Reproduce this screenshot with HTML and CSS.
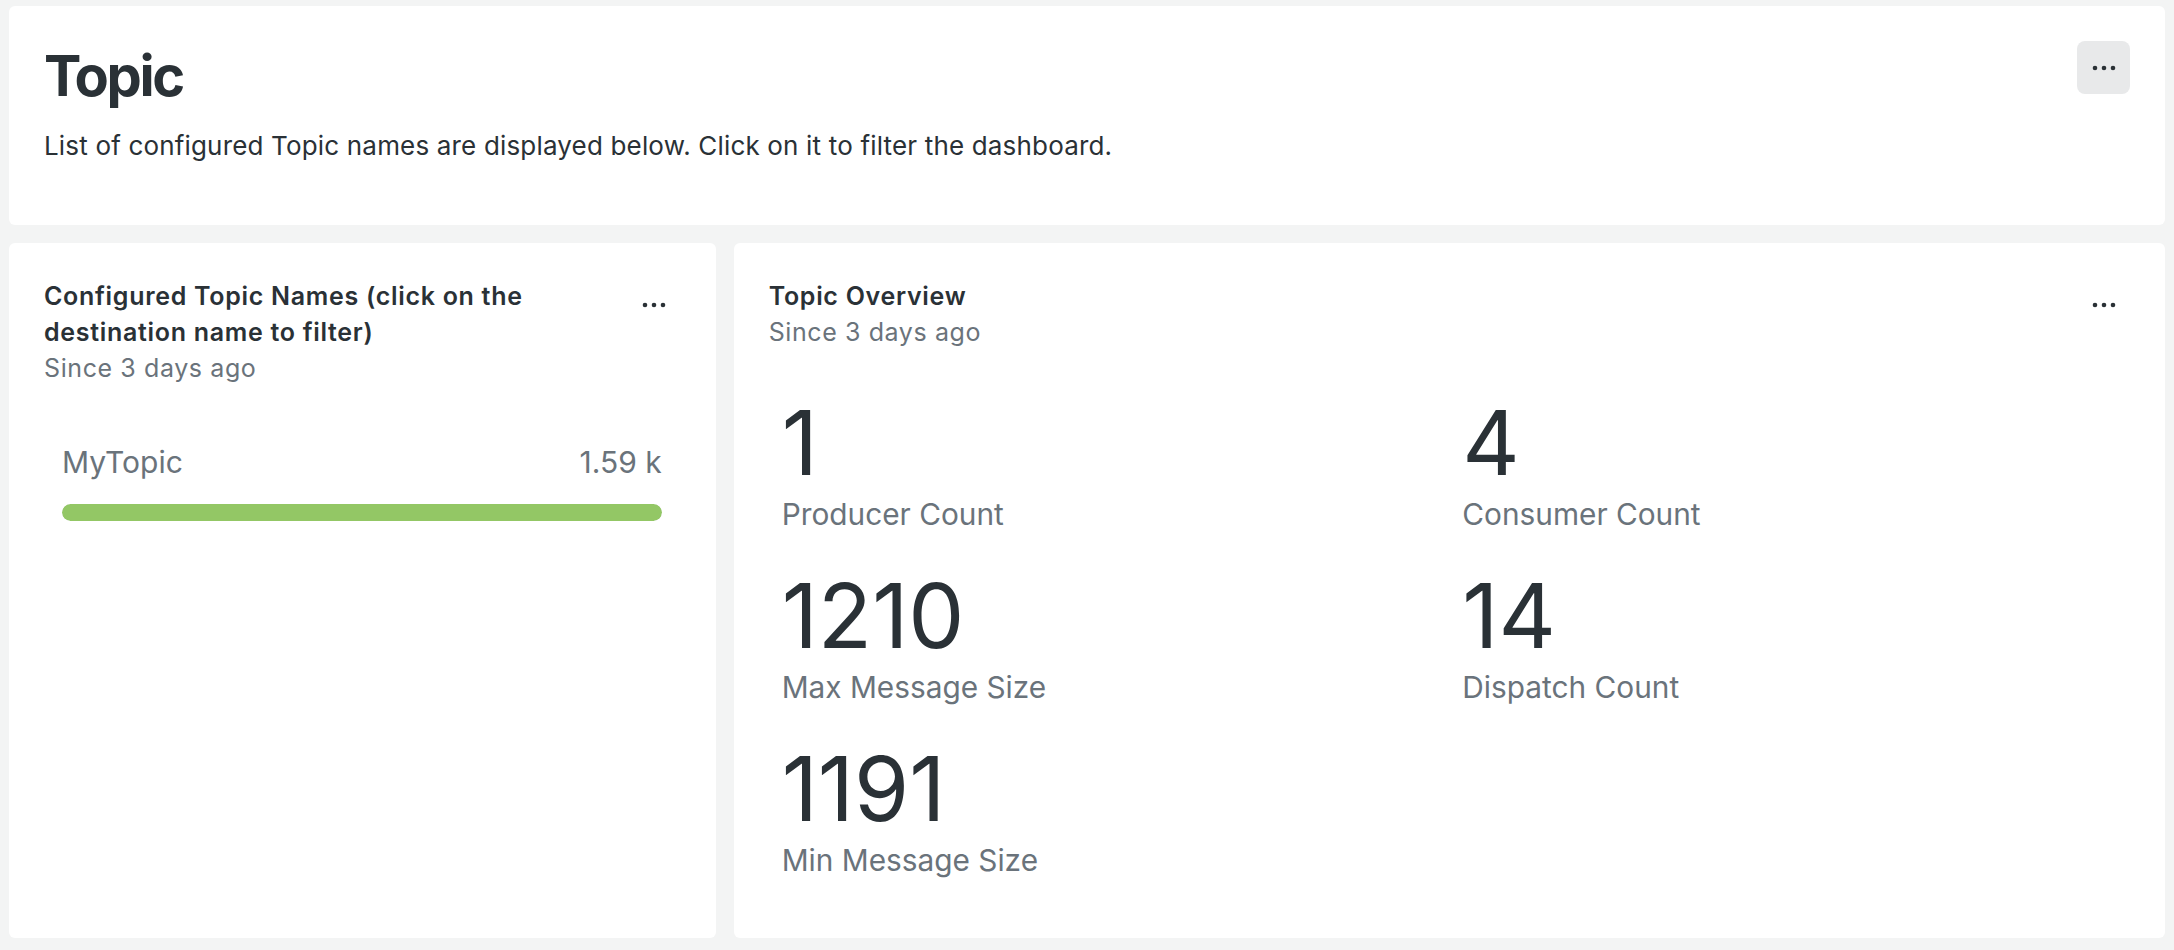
FILE: index.html
```html
<!DOCTYPE html>
<html lang="en">
<head>
<meta charset="utf-8">
<title>Topic</title>
<link rel="stylesheet" href="styles.css">
</head>
<body>
<div class="page">
  <section class="card intro">
    <div class="card-head">
      <h1 class="page-title">Topic</h1>
      <button class="more more-filled" aria-label="More">
        <svg width="24" height="8" viewBox="0 0 24 8"><circle cx="3" cy="4" r="2.3"/><circle cx="12" cy="4" r="2.3"/><circle cx="21" cy="4" r="2.3"/></svg>
      </button>
    </div>
    <p class="intro-text">List of configured Topic names are displayed below. Click on it to filter the dashboard.</p>
  </section>

  <div class="row">
    <section class="card widget">
      <div class="card-head">
        <div class="head-text narrow">
          <h2 class="widget-title">Configured Topic Names (click on the destination name to filter)</h2>
          <div class="widget-sub">Since 3 days ago</div>
        </div>
        <button class="more" aria-label="More">
          <svg width="24" height="8" viewBox="0 0 24 8"><circle cx="3" cy="4" r="2.3"/><circle cx="12" cy="4" r="2.3"/><circle cx="21" cy="4" r="2.3"/></svg>
        </button>
      </div>
      <ul class="bars">
        <li class="bar-item">
          <div class="bar-labels"><span>MyTopic</span><span>1.59 k</span></div>
          <div class="bar-track"><div class="bar-fill" style="width:100%"></div></div>
        </li>
      </ul>
    </section>

    <section class="card widget wide">
      <div class="card-head">
        <div class="head-text">
          <h2 class="widget-title">Topic Overview</h2>
          <div class="widget-sub">Since 3 days ago</div>
        </div>
        <button class="more" aria-label="More">
          <svg width="24" height="8" viewBox="0 0 24 8"><circle cx="3" cy="4" r="2.3"/><circle cx="12" cy="4" r="2.3"/><circle cx="21" cy="4" r="2.3"/></svg>
        </button>
      </div>
      <div class="stats">
        <div class="stat"><div class="stat-value">1</div><div class="stat-label">Producer Count</div></div>
        <div class="stat"><div class="stat-value">4</div><div class="stat-label">Consumer Count</div></div>
        <div class="stat"><div class="stat-value">1210</div><div class="stat-label">Max Message Size</div></div>
        <div class="stat"><div class="stat-value">14</div><div class="stat-label">Dispatch Count</div></div>
        <div class="stat"><div class="stat-value">1191</div><div class="stat-label">Min Message Size</div></div>
      </div>
    </section>
  </div>
</div>
</body>
</html>
```

FILE: styles.css
```css
* { box-sizing: border-box; }
html, body {
  margin: 0;
  padding: 0;
  background: #f3f4f4;
}
body {
  font-family: Inter, "Noto Sans", "Liberation Sans", sans-serif;
  color: #2a3136;
}
.page {
  height: 950px;
  padding: 6px 9px 12px;
  display: flex;
  flex-direction: column;
  gap: 18px;
}
.card {
  background: #ffffff;
  border-radius: 6px;
  padding: 35px;
}
.intro {
  height: 219px;
  flex: none;
}
.card-head {
  display: flex;
  justify-content: space-between;
  align-items: flex-start;
  gap: 40px;
}
.page-title {
  margin: 0;
  font-size: 56px;
  line-height: 70px;
  font-weight: 700;
  letter-spacing: -2.4px;
}
.intro-text {
  margin: 17px 0 0;
  font-size: 26px;
  line-height: 36px;
  letter-spacing: 0.17px;
}
.more {
  flex: none;
  width: 53px;
  height: 53px;
  border: 0;
  padding: 0;
  border-radius: 8px;
  background: transparent;
  display: flex;
  align-items: center;
  justify-content: center;
  fill: #2a3136;
}
.more-filled {
  background: #e8e9ea;
}
.row {
  flex: 1;
  display: grid;
  grid-template-columns: repeat(3, 1fr);
  gap: 18px;
}
.wide {
  grid-column: span 2;
}
.head-text {
  flex: 1;
  min-width: 0;
}
.head-text.narrow {
  max-width: 545px;
}
.widget-title {
  margin: 0;
  font-size: 25px;
  line-height: 36px;
  font-weight: 600;
  letter-spacing: 0.7px;
}
.widget-sub {
  font-size: 25px;
  line-height: 36px;
  letter-spacing: 0.6px;
  color: #6a737b;
}
.bars {
  list-style: none;
  margin: 58px 0 0;
  padding: 0 19px 0 18px;
}
.bar-labels {
  display: flex;
  justify-content: space-between;
  font-size: 30px;
  line-height: 36px;
  color: #6a737b;
}
.bar-track {
  margin-top: 24px;
  height: 17px;
  border-radius: 9px;
  background: #e9ecec;
  overflow: hidden;
}
.bar-fill {
  height: 100%;
  border-radius: 9px;
  background: #93c765;
}
.stats {
  margin-top: 39px;
  display: grid;
  grid-template-columns: 1fr 1fr;
  row-gap: 30px;
}
.stat {
  padding-left: 13px;
}
.stat-value {
  font-size: 89px;
  line-height: 107px;
  font-weight: 400;
  color: #2a3136;
}
.stat-label {
  font-size: 29.8px;
  line-height: 36px;
  color: #6a737b;
}
```
